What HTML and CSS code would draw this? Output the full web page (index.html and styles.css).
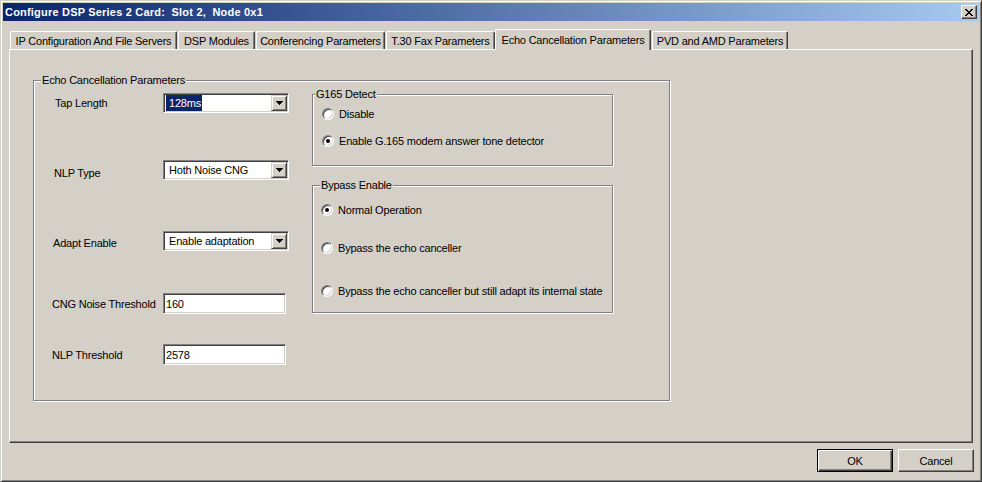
FILE: index.html
```html
<html>

<head>
  <link rel="stylesheet" href="styles.css">
</head>

<body>
  <div class="window">
    <div class="titlebar">
      <span class="caption">Configure DSP Series 2 Card:&nbsp; Slot 2,&nbsp; Node 0x1</span>
      <span class="close">
        <svg width="8" height="7" viewBox="0 0 8 7">
          <path d="M0 0h2v1H0z M6 0h2v1H6z M1 1h2v1H1z M5 1h2v1H5z M2 2h4v1H2z M3 3h2v1H3z M2 4h4v1H2z M1 5h2v1H1z M5 5h2v1H5z M0 6h2v1H0z M6 6h2v1H6z" fill="#000"/>
        </svg>
      </span>
    </div>

    <div class="tabs">
      <div class="tab tab-ip">IP Configuration And File Servers</div>
      <div class="tab tab-dsp">DSP Modules</div>
      <div class="tab tab-conf">Conferencing Parameters</div>
      <div class="tab tab-fax">T.30 Fax Parameters</div>
      <div class="tab tab-echo active">Echo Cancellation Parameters</div>
      <div class="tab tab-pvd">PVD and AMD Parameters</div>
    </div>

    <div class="sheet">
      <div class="group main-group">
        <span class="legend">Echo Cancellation Parameters</span>

        <div class="fields">
          <div class="row row-tap">
            <label class="indent-3">Tap Length</label>
            <div class="combo">
              <span class="value selected">128ms</span>
              <span class="drop"><svg width="7" height="4" viewBox="0 0 7 4"><path d="M0 0h7v1H0z M1 1h5v1H1z M2 2h3v1H2z M3 3h1v1H3z" fill="#000"/></svg></span>
            </div>
          </div>
          <div class="row row-nlp-type">
            <label class="indent-2 low-3">NLP Type</label>
            <div class="combo">
              <span class="value">Hoth Noise CNG</span>
              <span class="drop"><svg width="7" height="4" viewBox="0 0 7 4"><path d="M0 0h7v1H0z M1 1h5v1H1z M2 2h3v1H2z M3 3h1v1H3z" fill="#000"/></svg></span>
            </div>
          </div>
          <div class="row row-adapt">
            <label class="indent-1 low-2">Adapt Enable</label>
            <div class="combo">
              <span class="value">Enable adaptation</span>
              <span class="drop"><svg width="7" height="4" viewBox="0 0 7 4"><path d="M0 0h7v1H0z M1 1h5v1H1z M2 2h3v1H2z M3 3h1v1H3z" fill="#000"/></svg></span>
            </div>
          </div>
          <div class="row row-cng">
            <label>CNG Noise Threshold</label>
            <input class="field" type="text" value="160" readonly>
          </div>
          <div class="row row-nlp-thr">
            <label>NLP Threshold</label>
            <input class="field" type="text" value="2578" readonly>
          </div>
        </div>

        <div class="options">
          <div class="group g165">
            <span class="legend">G165 Detect</span>
            <div class="radio first"><span class="dot"></span>Disable</div>
            <div class="radio second"><span class="dot checked"></span>Enable G.165 modem answer tone detector</div>
          </div>
          <div class="group bypass">
            <span class="legend">Bypass Enable</span>
            <div class="radio first"><span class="dot checked"></span>Normal Operation</div>
            <div class="radio second"><span class="dot"></span>Bypass the echo canceller</div>
            <div class="radio third"><span class="dot"></span>Bypass the echo canceller but still adapt its internal state</div>
          </div>
        </div>
      </div>
    </div>

    <div class="actions">
      <button class="btn default">OK</button>
      <button class="btn">Cancel</button>
    </div>
  </div>
</body>

</html>
```

FILE: styles.css
```css
body {
  margin: 0;
  padding: 0;
  background: #d4d0c8;
  font-family: "Liberation Sans", Arial, sans-serif;
  font-size: 11px;
  letter-spacing: -0.2px;
  color: #000;
}

.window {
  width: 982px;
  height: 482px;
  box-sizing: border-box;
  background: #d4d0c8;
  border: 1px solid;
  border-color: #d4d0c8 #404040 #404040 #d4d0c8;
  box-shadow: inset 1px 1px 0 #fff, inset -1px -1px 0 #808080;
  padding: 2px;
  display: flex;
  flex-direction: column;
}

/* title bar */

.titlebar {
  height: 18px;
  flex: none;
  background: linear-gradient(to right, #0a246a, #a6caf0);
  display: flex;
  align-items: center;
  justify-content: space-between;
  padding: 0 2px;
}

.caption {
  color: #fff;
  font-weight: bold;
  letter-spacing: 0.2px;
}

.close {
  width: 16px;
  height: 14px;
  box-sizing: border-box;
  background: #d4d0c8;
  border: 1px solid;
  border-color: #fff #404040 #404040 #fff;
  box-shadow: inset -1px -1px 0 #808080;
  display: flex;
  align-items: center;
  justify-content: center;
}

/* tabs */

.tabs {
  display: flex;
  align-items: flex-end;
  height: 20px;
  flex: none;
  margin-top: 8px;
  padding-left: 7px;
}

.tab {
  height: 18px;
  box-sizing: border-box;
  border: 1px solid;
  border-bottom: none;
  border-color: #fff #404040 #fff #fff;
  box-shadow: inset -1px 0 0 #808080;
  border-radius: 2px 2px 0 0;
  display: flex;
  align-items: center;
  justify-content: center;
  padding-top: 1px;
  margin-right: 1px;
  white-space: nowrap;
}

.tab-ip { width: 167px; }
.tab-dsp { width: 77px; }
.tab-conf { width: 129px; }
.tab-fax { width: 109px; margin-right: 0; }
.tab-echo { width: 156px; }
.tab-pvd { width: 136px; }

.tab.active {
  height: 21px;
  margin-bottom: -1px;
  padding-top: 0;
  padding-bottom: 1px;
  position: relative;
  z-index: 1;
  background: #d4d0c8;
}

/* tab sheet */

.sheet {
  margin-left: 6px;
  width: 964px;
  height: 394px;
  flex: none;
  box-sizing: border-box;
  border: 1px solid;
  border-color: #fff #404040 #404040 #fff;
  box-shadow: inset -1px -1px 0 #808080;
}

.group {
  position: relative;
  box-sizing: border-box;
  border: 1px solid #808080;
  box-shadow: inset 1px 1px 0 #fff, 1px 1px 0 #fff;
}

.legend {
  position: absolute;
  top: -7px;
  left: 7px;
  padding: 0 1px;
  line-height: 13px;
  background: #d4d0c8;
  white-space: nowrap;
}

.main-group {
  margin: 30px 0 0 23px;
  width: 637px;
  height: 321px;
  display: flex;
}

.g165 .legend {
  left: 2px;
}

/* left column */

.fields {
  width: 278px;
  box-sizing: border-box;
  padding-left: 18px;
  display: flex;
  flex-direction: column;
}

.row {
  display: flex;
  align-items: center;
}

.row label {
  width: 111px;
  box-sizing: border-box;
  white-space: nowrap;
}

.row-tap { margin-top: 12px; height: 20px; }
.row-nlp-type { margin-top: 47px; height: 20px; }
.row-adapt { margin-top: 51px; height: 20px; }
.row-cng { margin-top: 42px; height: 21px; }
.row-nlp-thr { margin-top: 30px; height: 21px; }

.indent-1 { padding-left: 1px; }
.indent-2 { padding-left: 2px; }
.indent-3 { padding-left: 3px; }
.low-2 { padding-top: 4px; }
.low-3 { padding-top: 6px; }

.combo {
  width: 126px;
  height: 20px;
  box-sizing: border-box;
  background: #fff;
  border: 1px solid;
  border-color: #808080 #fff #fff #808080;
  box-shadow: inset 1px 1px 0 #404040, inset -1px -1px 0 #d4d0c8;
  padding: 1px;
  display: flex;
  align-items: center;
  justify-content: space-between;
}

.value {
  padding-left: 4px;
  white-space: nowrap;
}

.value.selected {
  margin-left: 1px;
  padding: 0 1px 0 3px;
  height: 16px;
  line-height: 16px;
  background: #0a246a;
  color: #fff;
}

.drop {
  width: 16px;
  height: 16px;
  box-sizing: border-box;
  background: #d4d0c8;
  border: 1px solid;
  border-color: #d4d0c8 #404040 #404040 #d4d0c8;
  box-shadow: inset 1px 1px 0 #fff, inset -1px -1px 0 #808080;
  display: flex;
  align-items: center;
  justify-content: center;
}

.field {
  width: 123px;
  height: 21px;
  box-sizing: border-box;
  margin: 0;
  padding: 0 2px;
  background: #fff;
  border: 1px solid;
  border-color: #808080 #fff #fff #808080;
  box-shadow: inset 1px 1px 0 #404040, inset -1px -1px 0 #d4d0c8;
  font: inherit;
  letter-spacing: inherit;
  color: #000;
  outline: none;
}

/* right column */

.options {
  width: 302px;
  padding-top: 13px;
}

.g165 {
  width: 301px;
  height: 72px;
  padding-left: 1px;
}

.bypass {
  width: 301px;
  height: 128px;
  margin-top: 19px;
}

.radio {
  height: 12px;
  display: flex;
  align-items: center;
  padding-left: 8px;
  white-space: nowrap;
}

.g165 .first { margin-top: 13px; }
.g165 .second { margin-top: 15px; }
.bypass .first { margin-top: 18px; }
.bypass .second { margin-top: 26px; }
.bypass .third { margin-top: 31px; }

.dot {
  width: 12px;
  height: 12px;
  flex: none;
  box-sizing: border-box;
  margin-right: 5px;
  border-radius: 50%;
  background: #fff;
  border: 1px solid;
  border-color: #808080 #fff #fff #808080;
  box-shadow: inset 1px 1px 0 #404040, inset -1px -1px 0 #d4d0c8;
  display: flex;
  align-items: center;
  justify-content: center;
}

.dot.checked::after {
  content: "";
  width: 4px;
  height: 4px;
  border-radius: 50%;
  background: #000;
}

/* buttons */

.actions {
  display: flex;
  justify-content: flex-end;
  gap: 5px;
  margin-top: 6px;
  padding-right: 5px;
}

.btn {
  width: 76px;
  height: 23px;
  box-sizing: border-box;
  margin: 0;
  padding: 0;
  background: #d4d0c8;
  border: 1px solid;
  border-color: #fff #404040 #404040 #fff;
  box-shadow: inset -1px -1px 0 #808080;
  font: inherit;
  letter-spacing: inherit;
  color: #000;
  outline: none;
}

.btn.default {
  border-color: #000;
  box-shadow: inset 1px 1px 0 #fff, inset -1px -1px 0 #404040, inset -2px -2px 0 #808080;
}
```
